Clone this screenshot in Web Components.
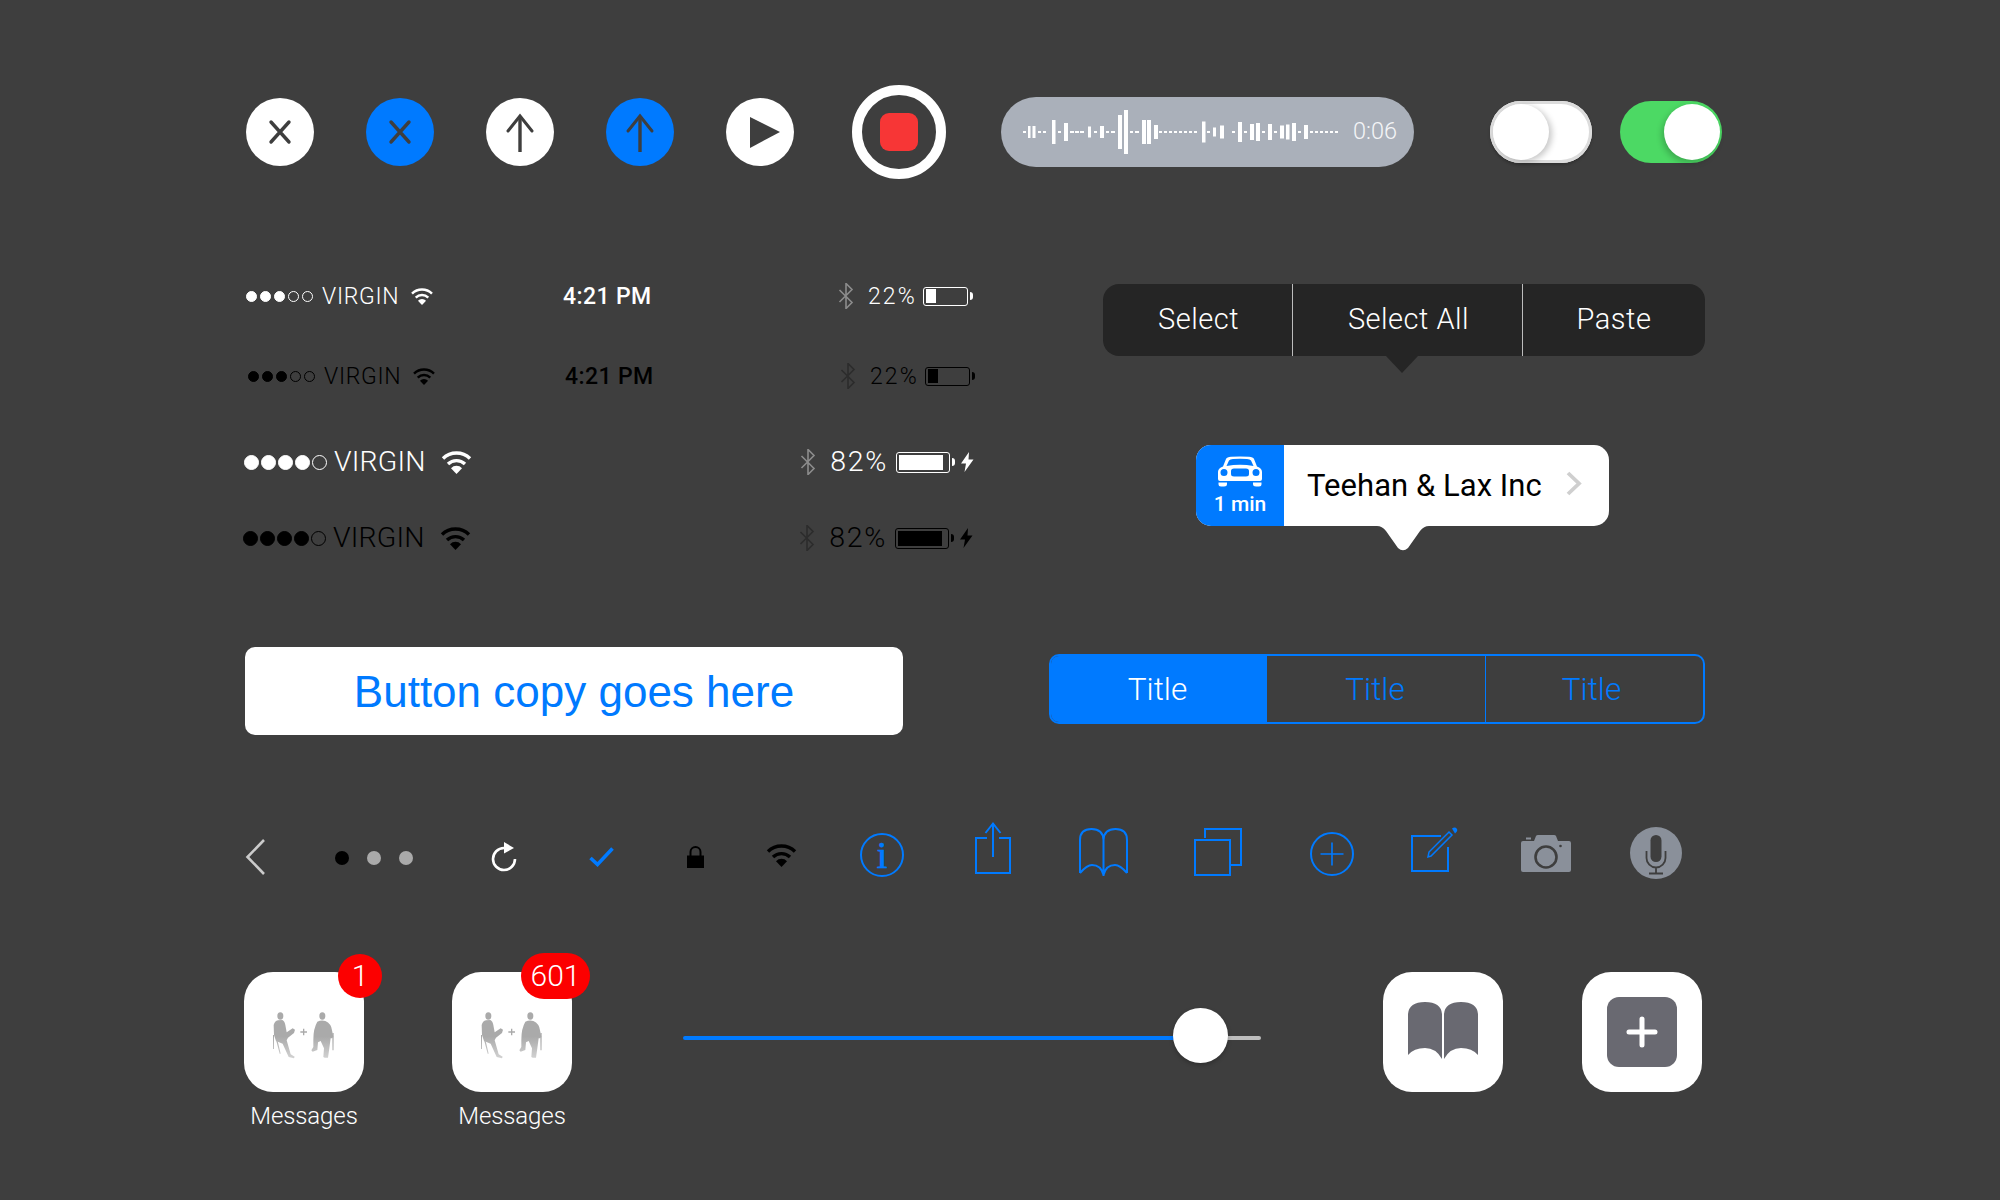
<!DOCTYPE html>
<html><head><meta charset="utf-8"><title>iOS UI kit</title>
<style>
html,body{margin:0;background:#3e3e3e}
body{width:2000px;height:1200px;overflow:hidden;font-family:"Liberation Sans",Arial,sans-serif;--blue:#007aff}
</style></head><body>
<ui-kit></ui-kit>
<script>
const def=(name,css,html,init)=>customElements.define(name,class extends HTMLElement{
  connectedCallback(){
    if(this.shadowRoot)return;
    const a=n=>this.getAttribute(n);
    const s=this.attachShadow({mode:'open'});
    s.innerHTML='<style>'+css+'</style>'+(typeof html==='function'?html(a):html);
    if(init)init(s,a);
  }
});
const wifiG=c=>`<g fill="none" stroke="${c}"><path d="M2 7.5a19.5 19.5 0 0 1 27 0" stroke-width="3.4"/><path d="M7 13a12.4 12.4 0 0 1 17 0" stroke-width="3.4"/><path d="M15.5 23L10 17.2a7.6 7.6 0 0 1 11 0z" fill="${c}" stroke="none"/></g>`;
const wifi=(w,h,c)=>`<svg width="${w}" height="${h}" viewBox="0 0 31 23">${wifiG(c)}</svg>`;

def('round-btn',':host{display:block;width:68px;height:68px;border-radius:50%;background:var(--bg,#fff)}svg{display:block}',a=>{
  const k=a('kind');
  const g={x:'<path d="M25 24L43 44M43 24L25 44" stroke="#3e3e3e" stroke-width="3.4" stroke-linecap="round"/>',
    up:'<path d="M34 54V20" stroke="#3e3e3e" stroke-width="3.4"/><path d="M22 33L34 18L46 33" fill="none" stroke="#3e3e3e" stroke-width="3" stroke-linecap="round"/>',
    play:'<path d="M24 19L54 34L24 50z" fill="#3e3e3e"/>'}[k];
  return `<svg width="68" height="68">${g}</svg>`;
});
def('record-btn',':host{display:flex;align-items:center;justify-content:center;box-sizing:border-box;width:94px;height:94px;border-radius:50%;border:10px solid #fff}i{width:38px;height:38px;border-radius:9px;background:#f73636}','<i></i>');
def('voice-pill',':host{display:flex;align-items:center;box-sizing:border-box;width:413px;height:70px;border-radius:35px;background:#aab0ba;padding-left:22px}svg{display:block;flex:none}span{margin-left:14px;color:#f4f5f7;font:300 23.5px/1 Roboto,sans-serif}',
()=>{
  const b=[[34,3,2],[39,2.5,12],[43.5,3,12],[49,3,2],[54,3,2],[63,3.5,24],[69,3,2],[75,4,18],[81,4,2],[86,4,2],[91,4,2],[99,3,11],[105,3,2],[111,4,12],[117,3,2],[122,4,2],[129,4,34],[135,4,44],[141,3,2],[146,4,2],[153,4,24],[158,4,24],[165,4,14],[170,3,2],[175,3,2],[180,3,2],[185,3,2],[190,3,2],[195,3,2],[200,3,2],[205,3,2],[213,3.5,21],[218,3,2],[224,3,9],[231,4,13],[243,3,2],[249,4,20],[255,3,2],[261,4,16],[267,4,18],[273,3,2],[279,4,16],[285,3,2],[291,4,13],[297,3.5,15],[303,4,18],[309,3,2],[315,4,14],[321,3,2],[326,3,2],[331,3,2],[336,3,2],[341,3,2],[346,3,2]];
  return `<svg width="316" height="46" viewBox="34 0 316 46" fill="#fff">${b.map(([x,w,h])=>`<rect x="${x}" y="${23-h/2}" width="${w}" height="${h}"/>`).join('')}</svg><span>0:06</span>`;
});
def('ios-toggle',`:host{display:block;position:relative;box-sizing:border-box;width:102px;height:62px;border-radius:31px}
:host([on]){background:#4cd964}
:host(:not([on])){background:#fff;box-shadow:inset 0 0 0 3px #dcdcdc,0 2px 3px rgba(0,0,0,.22)}
i{position:absolute;top:3px;width:56px;height:56px;border-radius:50%;background:#fff;box-shadow:3px 2px 6px rgba(0,0,0,.22)}
:host([on]) i{right:2px;box-shadow:-2px 3px 6px rgba(0,0,0,.22)}:host(:not([on])) i{left:3px}`,'<i></i>');

def('status-bar',`:host{display:grid;grid-template-columns:var(--tc,auto) auto 1fr;align-items:center;width:var(--w);color:var(--c);height:var(--h)}
.l,.r{display:flex;align-items:center}.r{justify-content:flex-end}
.d{display:flex;gap:var(--dg)}.d i{box-sizing:border-box;width:var(--d);height:var(--d);border-radius:50%;border:1px solid var(--c)}.d i.f{background:var(--c)}
.n,.p{font:300 var(--fs)/1 Roboto,sans-serif;letter-spacing:var(--ls)}
.n{margin-left:var(--n)}.wf{display:block;margin-left:var(--wm)}
.t{font:500 23px/1 Roboto,sans-serif;letter-spacing:.4px}
.p{margin:0 var(--pr) 0 var(--pl);letter-spacing:var(--ps)}
svg{display:block;flex:none}
.b{box-sizing:border-box;position:relative;width:var(--bw);height:var(--bh);border:1.5px solid var(--c);border-radius:3px;padding:var(--bp)}
.b i{display:block;height:100%;background:var(--c)}
.b:after{content:"";position:absolute;right:-6px;top:50%;margin-top:-4px;width:3px;height:8px;background:var(--c);border-radius:0 3px 3px 0}`,
a=>{
  const lg=a('size')==='large',c=a('tone')==='dark'?'#000':'#fff',bt=a('tone')==='dark'?'#2c2c2c':'#8c8c8c';
  const f=+a('filled');
  const v=lg?`--w:729px;--h:30px;--d:15px;--dg:2px;--fs:28.5px;--ls:.15px;--ps:1.7px;--n:7px;--wm:15px;--pl:14px;--pr:8px;--bw:54px;--bh:21px;--bp:2px`
            :`--w:722px;--h:26px;--tc:317px;--d:11px;--dg:3px;--fs:23px;--ls:.7px;--ps:2.2px;--n:9px;--wm:11px;--pl:14px;--pr:6px;--bw:45px;--bh:19px;--bp:1.5px`;
  return `<style>:host{--c:${c};${v}}</style><div class="l"><div class="d">${[0,1,2,3,4].map(i=>`<i class="${i<f?'f':''}"></i>`).join('')}</div><span class="n">VIRGIN</span><span class="wf">${lg?wifi(31,23,c):wifi(24,17,c)}</span></div>
  <div class="t">${a('time')||''}</div>
  <div class="r"><svg width="16" height="26" viewBox="0 0 16 26" fill="none" stroke="${bt}" stroke-width="1.6"><path d="M1.5 7L14 19.5L8 25.5V.5L14 6.5L1.5 19"/></svg><span class="p">${a('pct')}</span><div class="b"><i style="width:${a('fill')}"></i></div>${lg?`<svg width="13" height="20" viewBox="0 0 13 20" style="margin-left:11px;margin-right:-1px"><path d="M8 0L0 11.5H5L3.5 20L12.5 7.5H7.5z" fill="${c}"/></svg>`:''}</div>`;
});
def('edit-menu',`:host{display:flex;position:relative;width:602px;height:72px;border-radius:16px;background:#252525;color:#fff;font:300 29px/70px Roboto,sans-serif;letter-spacing:.5px}
:host:after{content:"";position:absolute;left:283px;top:72px;border:16.5px solid transparent;border-top:17px solid #252525;border-bottom:0}
div{text-align:center;box-sizing:border-box}div+div{border-left:1px solid #bdbdbd}`,
'<div style="width:189px;padding-left:2px">Select</div><div style="width:230px;padding-left:2px">Select All</div><div style="flex:1">Paste</div>');
def('map-callout',`:host{display:flex;position:relative;width:413px;height:81px;border-radius:15px;background:#fff;margin-bottom:25px}
.e{width:88px;background:var(--blue);border-radius:15px 0 0 15px;color:#fff;display:flex;flex-direction:column;align-items:center;padding-top:11px;box-sizing:border-box}
.e svg{display:block}.e span{font:500 21px/1 Roboto,sans-serif;margin-top:7px}
.n{font:400 31px/81px Roboto,sans-serif;color:#000;margin-left:23px;letter-spacing:.05px}
.c{position:absolute;left:370px;top:26px}.t{position:absolute;left:181px;top:81px}`,
`<div class="e"><svg width="46" height="31" viewBox="0 0 46 31"><path fill="#fff" fill-rule="evenodd" d="M1 23V16Q1 12 6 10.500L9 3Q10 1 14 .8Q23 0 32 .8Q36 1 37 3L40 10.500Q45 12 45 16V23Q45 25 43 25H3Q1 25 1 23ZM9.500 10Q23 7.500 36.500 10L34 4.500Q33 3 30 3Q23 2.500 16 3Q13 3 12 4.500ZM3.500 16.500a3.500 3.500 0 1 0 7 0a3.500 3.500 0 1 0 -7 0ZM35.500 16.500a3.500 3.500 0 1 0 7 0a3.500 3.500 0 1 0 -7 0ZM17 12.500Q14 12.500 14 15V18Q14 20.500 17 20.500H29Q32 20.500 32 18V15Q32 12.500 29 12.500Z"/><path fill="#fff" d="M1.500 26.500H10V28Q10 30.500 7 30.500H4Q1.500 30.500 1.500 28ZM36 26.500H44.500V28Q44.500 30.500 42 30.500H39Q36 30.500 36 28Z"/></svg><span>1 min</span></div>
<div class="n">Teehan &amp; Lax Inc</div>
<svg class="c" width="16" height="25"><path d="M2 2L13 12.500L2 23" fill="none" stroke="#cfcfcf" stroke-width="3.800"/></svg>
<svg class="t" width="52" height="25"><path d="M0 0Q5 0 9 5L21 22Q26 26.500 31 22L43 5Q47 0 52 0Z" fill="#fff"/></svg>`);
def('wide-button',`:host{display:flex;align-items:center;justify-content:center;width:658px;height:88px;border-radius:10px;background:#fff;color:var(--blue);font:400 44px/1 "Liberation Sans",sans-serif;padding-top:1px;box-sizing:border-box}`,'<slot></slot>');
def('seg-control',`:host{display:flex;box-sizing:border-box;width:656px;height:70px;border:2px solid var(--blue);border-radius:10px;overflow:hidden;color:var(--blue);font:300 31.5px/68px Roboto,sans-serif}
div{text-align:center}div+div{border-left:1px solid var(--blue)}.a{background:var(--blue);color:#fff}`,
'<div class="a" style="width:215px;padding-right:2px;box-sizing:border-box">Title</div><div style="width:219px;padding-right:2px;box-sizing:border-box">Title</div><div style="flex:1;padding-right:6px">Title</div>');

const B='#007aff',G='#8a909a',D='#3e3e3e';
const icons={
 back:[20,36,`<path d="M19 1L2.500 18L19 35" fill="none" stroke="#cbcbcb" stroke-width="2.600"/>`],
 dots:[78,14,`<circle cx="7" cy="7" r="7" fill="#000"/><circle cx="39" cy="7" r="7" fill="#aaa"/><circle cx="71" cy="7" r="7" fill="#aaa"/>`],
 refresh:[26,29,`<path d="M13 6A11 11 0 1 0 24 17" fill="none" stroke="#fff" stroke-width="2.600"/><path d="M13 0L23 6L13 11.500z" fill="#fff"/>`],
 check:[25,20,`<path d="M1.500 11L8.500 17.500L23.500 1.500" fill="none" stroke="${B}" stroke-width="3.600"/>`],
 lock:[17,22,`<path d="M3.500 10V6a5 5 0 0 1 10 0V10" fill="none" stroke="#000" stroke-width="2"/><rect y="9.500" width="17" height="12.500" fill="#000"/>`],
 wifi:[31,23,wifiG('#000')],
 info:[44,44,`<circle cx="22" cy="22" r="21" fill="none" stroke="${B}" stroke-width="2"/><text x="22" y="35" text-anchor="middle" font-family="Liberation Serif,serif" font-size="38" fill="${B}" stroke="${B}" stroke-width=".7">i</text>`],
 share:[36,52,`<path d="M12 16H1V51H35V16H24M18 35V2M10.500 11L18 1.500L25.500 11" fill="none" stroke="${B}" stroke-width="2"/>`],
 book:[49,48,`<path d="M1 45V12Q1 1 12.500 1Q24 1 24.500 12V48M24.500 12Q25 1 36.500 1Q48 1 48 12V45M1 45Q8 37 13 37Q22 37 24.500 47Q27 37 36 37Q41 37 48 45" fill="none" stroke="${B}" stroke-width="2"/>`],
 copy:[48,48,`<path d="M11 10V1H47V37H37" fill="none" stroke="${B}" stroke-width="2"/><rect x="1" y="12" width="35" height="35" fill="none" stroke="${B}" stroke-width="2"/>`],
 plus:[44,44,`<circle cx="22" cy="22" r="21" fill="none" stroke="${B}" stroke-width="2"/><path d="M10.500 22H33.500M22 10.500V33.500" stroke="${B}" stroke-width="1.600"/>`],
 compose:[47,45,`<path d="M30 9H1V44H37V20" fill="none" stroke="${B}" stroke-width="2"/><path d="M17 30L18 25L38 5L41 8L20 29z" fill="none" stroke="${B}" stroke-width="1.500"/><path d="M41 1.500Q44 -.5 46 2Q47 4 44 6.500z" fill="${B}"/>`],
 camera:[50,37,`<path fill="${G}" d="M2 6H13L15 1Q15.500 0 17 0H33Q34.500 0 35 1L37 6H48Q50 6 50 8V35Q50 37 48 37H2Q0 37 0 35V8Q0 6 2 6Z"/><rect x="5" y="2.500" width="5" height="2" fill="${G}"/><ellipse cx="25" cy="22" rx="10.500" ry="10.500" fill="none" stroke="${D}" stroke-width="2.600"/><circle cx="39.500" cy="11" r="1.300" fill="${D}"/>`],
 mic:[52,52,`<circle cx="26" cy="26" r="26" fill="${G}"/><rect x="20.500" y="8" width="11" height="27" rx="5.500" fill="${D}"/><path d="M16.500 24V31a9.500 9.500 0 0 0 19 0V24M26 40.500V46" fill="none" stroke="${D}" stroke-width="1.800"/><path d="M19 46.500H33" stroke="${D}" stroke-width="2"/>`]
};
def('ui-icon',':host{display:block;flex:none}svg{display:block;overflow:visible}',a=>{
  const [w,h,g]=icons[a('name')];
  return `<svg width="${w}" height="${h}" viewBox="0 0 ${w} ${h}">${g}</svg>`;
});
const figures=`<svg width="72" height="56" viewBox="0 0 216 168"><defs><linearGradient id="f" gradientUnits="userSpaceOnUse" x1="0" y1="95" x2="0" y2="170"><stop offset="0" stop-color="#aaa"/><stop offset="1" stop-color="#d8d8d8"/></linearGradient></defs>
<g fill="url(#f)"><ellipse cx="37" cy="33" rx="9" ry="11"/><path d="M17 60Q20 48 30 46L43 45Q50 48 52 60L56 82L74 70L81 74L78 84L60 98L56 106L68 148L80 155L78 160L62 156L44 116L24 108L18 90Z"/><path d="M15 90H18L18 132H15ZM25 108H29L38 146H35Z"/>
<ellipse cx="163" cy="33" rx="9" ry="11"/><path d="M148 50Q160 44 172 48Q190 56 192 76L196 96L192 100L188 100L184 130L180 158L170 158L166 156L168 130L158 108L150 112L148 135L134 140L130 136L136 126L136 104Q136 70 148 50Z"/><path d="M193 84H197V136H193Z"/></g>
<path d="M97 81H117M107 71V91" stroke="#aaa" stroke-width="4"/></svg>`;
def('app-icon',`:host{display:block;position:relative;width:120px}
.t{width:120px;height:120px;border-radius:29px;background:#fff;display:flex;align-items:flex-start;justify-content:center;padding-top:33px;box-sizing:border-box}
.t svg{display:block}
.l{color:#fff;text-align:center;font:300 24px/1 Roboto,sans-serif;margin-top:12px;letter-spacing:-.1px;width:120px}
.b{position:absolute;top:var(--bt);right:var(--br);height:var(--bs);min-width:var(--bs);padding:0 var(--bpad);box-sizing:border-box;border-radius:23px;background:#fc0000;color:#fff;font:300 30px/var(--bs) Roboto,sans-serif;text-align:center}`,
a=>`<div class="t">${figures}</div><div class="l">Messages</div><div class="b" style="${a('count').length>1?'--bt:-19px;--br:-18px;--bs:46px;--bpad:11px;width:69px;padding:0':'--bt:-18px;--br:-18px;--bs:44px;--bpad:0'}">${a('count')}</div>`);
def('ios-slider',`:host{display:flex;align-items:center;position:relative;width:578px;height:55px}
.a{width:500px;height:4px;border-radius:2px 0 0 2px;background:var(--blue);margin-top:5px}.b{flex:1;height:4px;background:#bdbdbd;border-radius:0 2px 2px 0;margin-top:5px}
i{position:absolute;left:490px;top:0;width:55px;height:55px;border-radius:50%;background:#fff;box-shadow:0 2px 4px rgba(0,0,0,.25)}`,'<div class="a"></div><div class="b"></div><i></i>');
def('book-tile',`:host{display:flex;align-items:flex-start;justify-content:center;padding-top:30px;box-sizing:border-box;width:120px;height:120px;border-radius:29px;background:#fff}svg{display:block}`,
`<svg width="70" height="57"><path fill="#696971" d="M0 12Q1 0 17 0Q33 0 34 12V57Q28 46 17 46Q6 46 0 53ZM70 12Q69 0 53 0Q37 0 36 12V57Q42 46 53 46Q64 46 70 53Z"/></svg>`);
def('plus-tile',`:host{display:flex;align-items:center;justify-content:center;width:120px;height:120px;border-radius:29px;background:#fff}
div{width:70px;height:70px;border-radius:12px;background:#696971;display:flex;align-items:center;justify-content:center}svg{display:block}`,
`<div><svg width="32" height="32"><path d="M16 3V29M3 16H29" stroke="#fff" stroke-width="5" stroke-linecap="round"/></svg></div>`);

def('ui-kit',`:host{display:block;padding:85px 0 0 244px;box-sizing:border-box;--blue:#007aff}
.row{display:flex;align-items:flex-start}
.r1{height:94px;align-items:center}
.r2{margin-top:104px;height:268px}
.left{width:731px;flex:none}
.right{margin:1px 0 0 128px}
map-callout{margin:89px 0 0 93px}
.r3{margin-top:96px}
seg-control{margin:7px 0 0 146px}
.r4{margin-top:87px;height:57px}
.r5{margin-top:93px}`,
`<div class="row r1">
 <round-btn kind="x" style="margin-left:2px"></round-btn>
 <round-btn kind="x" style="margin-left:52px;--bg:#007aff"></round-btn>
 <round-btn kind="up" style="margin-left:52px"></round-btn>
 <round-btn kind="up" style="margin-left:52px;--bg:#007aff"></round-btn>
 <round-btn kind="play" style="margin-left:52px"></round-btn>
 <record-btn style="margin-left:58px"></record-btn>
 <voice-pill style="margin-left:55px"></voice-pill>
 <ios-toggle style="margin-left:76px"></ios-toggle>
 <ios-toggle on style="margin-left:28px"></ios-toggle>
</div>
<div class="row r2">
 <div class="left">
  <status-bar filled="3" time="4:21 PM" pct="22%" fill="10px" style="margin-left:2px"></status-bar>
  <status-bar tone="dark" filled="3" time="4:21 PM" pct="22%" fill="10px" style="margin:54px 0 0 4px"></status-bar>
  <status-bar size="large" filled="4" pct="82%" fill="44px" style="margin:58px 0 0 0"></status-bar>
  <status-bar size="large" tone="dark" filled="4" pct="82%" fill="44px" style="margin:46px 0 0 -1px"></status-bar>
 </div>
 <div class="right"><edit-menu></edit-menu><map-callout></map-callout></div>
</div>
<div class="row r3"><wide-button style="margin-left:1px">Button copy goes here</wide-button><seg-control></seg-control></div>
<div class="row r4">
 <ui-icon name="back" style="margin:17px 0 0 1px"></ui-icon>
 <ui-icon name="dots" style="margin:29px 0 0 70px"></ui-icon>
 <ui-icon name="refresh" style="margin:20px 0 0 78px"></ui-icon>
 <ui-icon name="check" style="margin:25px 0 0 72px"></ui-icon>
 <ui-icon name="lock" style="margin:24px 0 0 73px"></ui-icon>
 <ui-icon name="wifi" style="margin:22px 0 0 62px"></ui-icon>
 <ui-icon name="info" style="margin:11px 0 0 63px"></ui-icon>
 <ui-icon name="share" style="margin:0 0 0 71px"></ui-icon>
 <ui-icon name="book" style="margin:6px 0 0 68px"></ui-icon>
 <ui-icon name="copy" style="margin:6px 0 0 66px"></ui-icon>
 <ui-icon name="plus" style="margin:10px 0 0 68px"></ui-icon>
 <ui-icon name="compose" style="margin:5px 0 0 57px"></ui-icon>
 <ui-icon name="camera" style="margin:13px 0 0 63px"></ui-icon>
 <ui-icon name="mic" style="margin:5px 0 0 59px"></ui-icon>
</div>
<div class="row r5">
 <app-icon count="1"></app-icon>
 <app-icon count="601" style="margin-left:88px"></app-icon>
 <ios-slider style="margin:36px 0 0 111px"></ios-slider>
 <book-tile style="margin-left:122px"></book-tile>
 <plus-tile style="margin-left:79px"></plus-tile>
</div>`);
</script>
</body></html>
